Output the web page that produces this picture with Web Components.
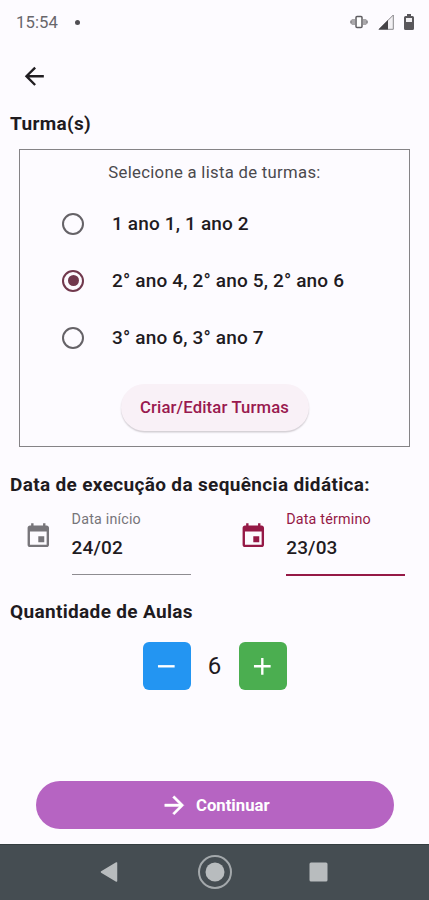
<!DOCTYPE html>
<html lang="pt-BR">
<head>
<meta charset="utf-8">
<title>Turmas</title>
<style>
html,body{margin:0;height:100%;background:#fdfbff}
body{font-family:Roboto,"Noto Sans",sans-serif;color:#1f1b1f;overflow:hidden}
</style>
</head>
<body>
<lesson-screen></lesson-screen>
<script>
const define = (name, html) => customElements.define(name, class extends HTMLElement {
  constructor() {
    super();
    const t = document.createElement('template');
    t.innerHTML = html;
    this.attachShadow({mode: 'open'}).append(t.content.cloneNode(true));
  }
});

define('status-bar', `
<style>
:host{display:flex;box-sizing:border-box;height:44px;padding:0 15px 0 16px;align-items:center;color:#68666b}
time{font-size:16.7px;line-height:20px;letter-spacing:.1px;padding-top:2px}
i{width:5px;height:5px;border-radius:50%;background:#504e53;margin-left:17px}
svg{display:block}
.v{margin-left:auto}.s{margin-left:10px}.b{margin-left:10px}
</style>
<time>15:54</time><i></i>
<svg class="v" width="18" height="14" viewBox="0 0 18 14"><path d="M0 7l2-3h3v6H2zM18 7l-2-3h-3v6h3z" fill="#aaa8ab"/><path d="M1 5.5v3M17 5.5v3" stroke="#77757a"/><rect x="6" y="1.5" width="6" height="11" rx="1" fill="#fff" stroke="#5e5c60" stroke-width="1.5"/></svg>
<svg class="s" width="16" height="16" viewBox="0 0 16 16"><path d="M15.3 1v14.3H1z" fill="#f2f0f3" stroke="#89878b" stroke-width="1"/><path d="M10 6v9.5H.5z" fill="#454347"/></svg>
<svg class="b" width="10" height="16" viewBox="0 0 10 16"><path d="M3 0h4v2h1.5Q10 2 10 3.5v11Q10 16 8.500 16h-7Q0 16 0 14.500v-11Q0 2 1.500 2H3z" fill="#59575b"/><path d="M2 4h6V8H2z" fill="#f1eff2"/></svg>`);

define('app-bar', `
<style>:host{display:flex;height:68px;box-sizing:border-box;padding:0 0 3px 20px;align-items:center}svg{display:block}</style>
<svg width="28.600" height="28.600" viewBox="0 0 24 24" fill="#201d21"><path d="M20 11H7.830l5.590-5.590L12 4l-8 8 8 8 1.410-1.410L7.830 13H20v-2z"/></svg>`);

define('section-title', `
<style>:host{display:block;font-size:19px;line-height:24px;font-weight:700;letter-spacing:.34px;padding-left:10px;white-space:nowrap}</style><slot></slot>`);

define('class-panel', `
<style>
:host{display:flex;flex-direction:column;box-sizing:border-box;width:391px;height:298px;margin-left:19px;border:1.400px solid #858386;padding-top:12px}
.cap{text-align:center;font-size:16.700px;line-height:22px;letter-spacing:.3px;color:#4b494d;padding-bottom:11px}
.foot{display:flex;justify-content:center;padding-top:18px}
</style>
<div class="cap"><slot name="caption"></slot></div>
<slot></slot>
<div class="foot"><slot name="action"></slot></div>`);

define('radio-option', `
<style>
:host{display:flex;height:57px;align-items:center;padding-left:42px;gap:28px;font-size:19px;letter-spacing:.16px;font-weight:500;white-space:nowrap}
i{box-sizing:border-box;width:22px;height:22px;border-radius:50%;border:2.200px solid #656267;display:grid;place-items:center}
:host([checked]) i{border-color:#71384d}
:host([checked]) i::after{content:"";width:11px;height:11px;border-radius:50%;background:#71384d}
</style><i></i><span><slot></slot></span>`);

define('tonal-button', `
<style>button{all:unset;box-sizing:border-box;width:188px;height:47px;border-radius:24px;background:#f9f1f7;color:#99194f;text-align:center;font-size:16.700px;font-weight:500;letter-spacing:.14px;box-shadow:0 1.500px 1.500px #d2cdd3;white-space:nowrap}:host{display:block}</style>
<button><slot></slot></button>`);

define('date-field', `
<style>
:host{display:flex;align-items:flex-start;gap:19px;--c:#77757a}
:host([focused]){--c:#951946}
svg{display:block;margin-top:12px}
.f{width:119px;height:65px;box-sizing:border-box;border-bottom:1px solid #8e8c91}
:host([focused]) .f{border-bottom:2px solid var(--c);height:66px}
.l{font-size:14.300px;line-height:18px;letter-spacing:.2px;color:var(--c);white-space:nowrap}
.v{font-size:19px;line-height:24px;padding-top:8px;letter-spacing:.15px;font-weight:500}
</style>
<svg width="28.600" height="28.600" viewBox="0 0 24 24" fill="var(--c)"><path d="M17 12h-5v5h5v-5zM16 1v2H8V1H6v2H5c-1.110 0-1.990.9-1.990 2L3 19c0 1.100.89 2 2 2h14c1.100 0 2-.9 2-2V5c0-1.100-.9-2-2-2h-1V1h-2zm3 18H5V8h14v11z"/></svg>
<div class="f"><div class="l"><slot name="label"></slot></div><div class="v"><slot></slot></div></div>`);

define('count-stepper', `
<style>
:host{display:flex;justify-content:center;align-items:center}
b{display:grid;place-items:center;width:48px;height:48px;border-radius:6px;background:#2395f2}
b.p{background:#4bae50}
span{width:48px;text-align:center;font-size:24px;line-height:28px}
svg{display:block}
</style>
<b><svg width="28.600" height="28.600" viewBox="0 0 24 24" fill="#fff"><path d="M19 13H5v-2h14z"/></svg></b>
<span><slot></slot></span>
<b class="p"><svg width="28.600" height="28.600" viewBox="0 0 24 24" fill="#fff"><path d="M19 13h-6v6h-2v-6H5v-2h6V5h2v6h6z"/></svg></b>`);

define('primary-button', `
<style>:host{display:block}button{all:unset;box-sizing:border-box;width:358px;height:48px;border-radius:24px;background:#b664c2;color:#fff;display:flex;align-items:center;justify-content:center;gap:7px;font-size:16.700px;font-weight:700;letter-spacing:.02px;white-space:nowrap}svg{display:block}</style>
<button><svg width="28.600" height="28.600" viewBox="0 0 24 24" fill="#fff" stroke="#fff" stroke-width=".4"><path d="M12 4l-1.410 1.410L16.170 11H4v2h12.170l-5.580 5.590L12 20l8-8z"/></svg><span><slot></slot></span></button>`);

define('nav-bar', `
<style>:host{display:flex;height:56px;background:#454d52;border-top:1px solid #353e41;box-sizing:border-box;align-items:center;padding:0 0 1px 100px}svg{display:block}.h{margin-left:79px}.r{margin-left:76px}</style>
<svg width="18" height="20" viewBox="0 0 18 20"><path d="M1.500 10L16.500 1v18z" fill="#b8bcbe" stroke="#b8bcbe" stroke-width="1.500" stroke-linejoin="round"/></svg>
<svg class="h" width="36" height="36" viewBox="0 0 36 36"><circle cx="18" cy="18" r="16" fill="none" stroke="#a3a8ab" stroke-width="2"/><circle cx="18" cy="18" r="9.500" fill="#b8bcbe"/></svg>
<svg class="r" width="19" height="20" viewBox="0 0 19 20"><rect x=".5" y=".5" width="18" height="19" rx="1.500" fill="#b8bcbe"/></svg>`);

define('lesson-screen', `
<style>
:host{display:flex;flex-direction:column;width:429px;height:900px;background:#fdfbff}
class-panel{margin-top:13px}
.t2{margin-top:26px}
.dates{display:flex;gap:48px;padding:13px 0 0 24px;height:78px;box-sizing:border-box}
.t3{margin-top:25px}
count-stepper{margin-top:18px}
primary-button{margin:auto 0 15px 36px}
</style>
<status-bar></status-bar>
<app-bar></app-bar>
<section-title class="t1">Turma(s)</section-title>
<class-panel>
<span slot="caption">Selecione a lista de turmas:</span>
<radio-option>1 ano 1, 1 ano 2</radio-option>
<radio-option checked>2° ano 4, 2° ano 5, 2° ano 6</radio-option>
<radio-option>3° ano 6, 3° ano 7</radio-option>
<tonal-button slot="action">Criar/Editar Turmas</tonal-button>
</class-panel>
<section-title class="t2">Data de execução da sequência didática:</section-title>
<div class="dates">
<date-field><span slot="label">Data início</span>24/02</date-field>
<date-field focused><span slot="label">Data término</span>23/03</date-field>
</div>
<section-title class="t3">Quantidade de Aulas</section-title>
<count-stepper>6</count-stepper>
<primary-button>Continuar</primary-button>
<nav-bar></nav-bar>`);
</script>
</body>
</html>
